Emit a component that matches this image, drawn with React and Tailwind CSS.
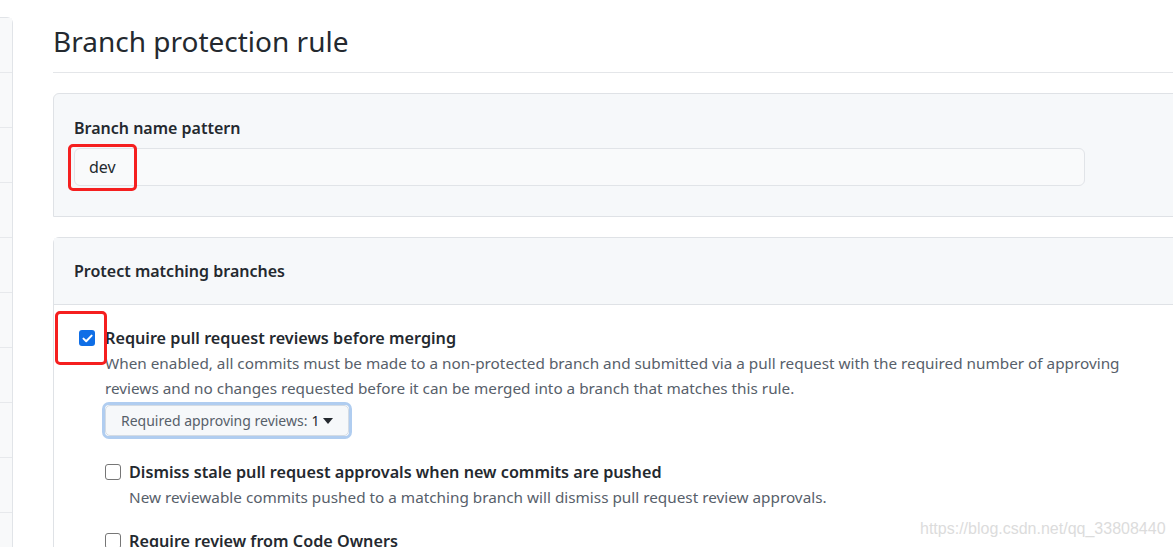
import React from "react";

const font = { fontFamily: '"Noto Sans", "Open Sans", sans-serif' };

function CheckBox({ checked }) {
  if (checked) {
    return (
      <div className="w-[16px] h-[16px] rounded-[3px] bg-[#0f6ee6] flex items-center justify-center shrink-0">
        <svg width="11" height="9" viewBox="0 0 11 9" fill="none">
          <path d="M1.5 4.6 L4.2 7.2 L9.6 1.6" stroke="white" strokeWidth="2" strokeLinecap="round" strokeLinejoin="round" />
        </svg>
      </div>
    );
  }
  return <div className="w-[16px] h-[16px] rounded-[3px] border-[1.5px] border-[#767676] bg-white shrink-0"></div>;
}

function Option({ checked, title, children, marked, gap = "gap-[10px]" }) {
  return (
    <div className={`flex items-start ${gap} relative`}>
      <div className="pt-[4px]">
        <CheckBox checked={checked} />
      </div>
      {marked && (
        <div className="absolute left-[-24px] top-[-15px] w-[52px] h-[54px] border-[3px] border-[#f51f1f] rounded-[5px]"></div>
      )}
      <div className="flex flex-col">
        <div className="text-[16.2px] leading-[25px] font-semibold text-[#24292f]">{title}</div>
        {children}
      </div>
    </div>
  );
}

export default function App() {
  return (
    <div className="w-[1173px] h-[547px] overflow-hidden bg-white flex relative" style={font}>
      {/* SIDEBAR */}
      <div className="w-[13px] shrink-0 mt-[17px] border border-l-0 border-[#e1e4e8] rounded-tr-md flex flex-col">
        {[0, 1, 2, 3, 4, 5, 6, 7, 8, 9].map((i) => (
          <div key={i} className="h-[55px] shrink-0 border-b border-[#e7e9ec] bg-[#f8f9fa]"></div>
        ))}
      </div>

      {/* MAIN */}
      <div className="pl-[40px] shrink-0 w-[1180px]">
        <div className="pt-[20px] pb-[10px] border-b border-[#e4e6e9]">
          <h1 className="text-[28px] leading-[42px] font-normal text-[#24292f]">Branch protection rule</h1>
        </div>

        {/* PATTERN BOX */}
        <div className="mt-[20px] bg-[#f6f8fa] border border-[#dfe2e6] rounded-tl-md pl-[20px] pt-[22px] pb-[30px]">
          <div className="text-[16px] leading-[24px] font-semibold text-[#24292f]">Branch name pattern</div>
          <div className="relative mt-[8px] w-[1011px] h-[38px] bg-[#f9fafb] border border-[#e1e4e8] rounded-md flex items-center pl-[14px]">
            <span className="text-[16px] text-[#24292f]">dev</span>
            <div className="absolute left-[-7px] top-[-5px] w-[69px] h-[47px] border-[3px] border-[#f51f1f] rounded-[5px]"></div>
          </div>
        </div>

        {/* PROTECT BOX */}
        <div className="mt-[20px] border border-[#dfe2e6] rounded-tl-md">
          <div className="h-[67px] bg-[#f6f8fa] border-b border-[#dfe2e6] flex items-center pl-[20px]">
            <span className="text-[16px] font-semibold text-[#24292f]">Protect matching branches</span>
          </div>
          <div className="pl-[25px] pt-[21px] flex flex-col">
            <Option checked marked title="Require pull request reviews before merging">
              <p className="text-[15.3px] leading-[25px] text-[#57606a] w-[1030px]">
                When enabled, all commits must be made to a non-protected branch and submitted via a pull request with the required number of approving reviews and no changes requested before it can be merged into a branch that matches this rule.
              </p>
              <div className="mt-[1px] ml-[-3px] w-fit rounded-[7px] border-[3px] border-[#b0cdf0]">
                <button className="h-[31px] px-[15px] bg-[#f6f8fa] border border-[#d3dbe4] rounded-[5px] flex items-center gap-[4px] text-[14px] text-[#57606a]">
                  Required approving reviews: <span className="text-[#24292f]">1</span>
                  <svg width="10" height="6" viewBox="0 0 10 6"><path d="M0 0 H10 L5 6 Z" fill="#24292f" /></svg>
                </button>
              </div>

              <div className="mt-[21px] flex flex-col gap-[19px]">
                <Option gap="gap-[8px]" title="Dismiss stale pull request approvals when new commits are pushed">
                  <p className="text-[15.3px] leading-[25px] text-[#57606a]">
                    New reviewable commits pushed to a matching branch will dismiss pull request review approvals.
                  </p>
                </Option>
                <Option gap="gap-[8px]" title="Require review from Code Owners" />
              </div>
            </Option>
          </div>
        </div>
      </div>

      {/* WATERMARK */}
      <div className="absolute left-[920px] top-[517px] text-[16px] text-[#dcdcdc]" style={{ fontFamily: '"Liberation Sans", Arial, sans-serif' }}>
        https://blog.csdn.net/qq_33808440
      </div>
    </div>
  );
}
